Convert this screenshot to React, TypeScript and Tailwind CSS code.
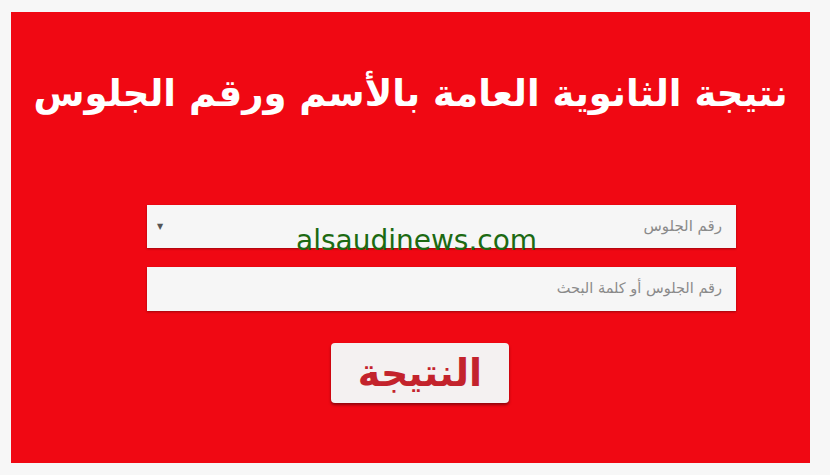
import React from "react";

export default function App() {
  return (
    <div className="w-[830px] h-[475px] bg-[#f7f7f7] pt-[12px] pl-[11px]" style={{ fontFamily: '"DejaVu Sans", sans-serif' }}>
      <div className="relative w-[799px] h-[451px] bg-[#f00813] flex flex-col">
        <div dir="rtl" className="mt-[58px] self-center text-white font-bold text-[37px] leading-[48px] whitespace-nowrap">
          نتيجة الثانوية العامة بالأسم ورقم الجلوس
        </div>
        <div className="mt-[87px] ml-[136px] w-[589px] flex flex-col gap-[19px]">
          <div dir="rtl" className="h-[43px] bg-[#f6f6f6] shadow-[0_1px_2px_rgba(0,0,0,0.35)] flex items-center justify-between pr-[14px] pl-[10px]">
            <span className="text-[15px] text-[#8a8a8a]">رقم الجلوس</span>
            <span className="text-[8px] text-[#555]">▼</span>
          </div>
          <div dir="rtl" className="h-[44px] bg-[#f6f6f6] shadow-[0_1px_2px_rgba(0,0,0,0.35)] flex items-center pr-[14px]">
            <span className="text-[14.5px] text-[#8a8a8a]">رقم الجلوس أو كلمة البحث</span>
          </div>
        </div>
        <div className="mt-[32px] ml-[320px] w-[178px] h-[60px] bg-[#f4f1f1] rounded-[4px] shadow-[0_2px_3px_rgba(0,0,0,0.4)] flex items-center justify-center">
          <span dir="rtl" className="text-[#c3232c] font-bold text-[38px] leading-none">النتيجة</span>
        </div>
        <div className="absolute left-[285px] top-[211px] text-[#1c6a12] text-[28px] leading-[36px] whitespace-nowrap">
          alsaudinews.com
        </div>
      </div>
    </div>
  );
}
